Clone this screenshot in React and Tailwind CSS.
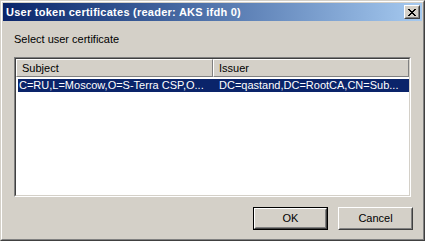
const FONT = "font-['Tahoma','Liberation_Sans',sans-serif]";

function CloseGlyph() {
  const rows = ['11000011', '01100110', '00111100', '00011000', '00111100', '01100110', '11000011'];
  return (
    <svg width="8" height="7" viewBox="0 0 8 7" shapeRendering="crispEdges">
      {rows.map((row, y) =>
        row.split('').map((c, x) => (c === '1' ? <rect key={`${x}-${y}`} x={x} y={y} width="1" height="1" fill="#000" /> : null))
      )}
    </svg>
  );
}

function Button({ children, isDefault }) {
  const inner = (
    <div className="w-full h-full border border-t-white border-l-white border-b-[#404040] border-r-[#404040]">
      <div className="w-full h-full border border-t-[#d4d0c8] border-l-[#d4d0c8] border-b-[#808080] border-r-[#808080] flex items-center justify-center text-black">
        {children}
      </div>
    </div>
  );
  return (
    <div className={`w-[75px] h-[23px] bg-[#d4d0c8] ${isDefault ? 'border border-black' : ''}`}>
      {inner}
    </div>
  );
}

function HeaderCell({ children, className }) {
  return (
    <div className={`h-full bg-[#d4d0c8] border border-t-white border-l-white border-b-[#808080] border-r-[#808080] pl-[5px] flex items-center ${className}`}>
      {children}
    </div>
  );
}

export default function App() {
  return (
    <div className={`w-[425px] h-[241px] border border-t-[#d4d0c8] border-l-[#d4d0c8] border-b-[#404040] border-r-[#404040] text-[11px] leading-[13px] ${FONT}`}>
      <div className="h-full border border-t-white border-l-white border-b-[#808080] border-r-[#808080] bg-[#d4d0c8] p-px flex flex-col">
        <div className="h-[18px] flex items-center bg-gradient-to-r from-[#0a246a] to-[#a6caf0] pl-[3px] pr-[2px]">
          <span className="flex-1 font-bold text-white whitespace-nowrap tracking-[0.25px]">User token certificates (reader: AKS ifdh 0)</span>
          <div className="w-[16px] h-[14px] bg-[#d4d0c8] border border-t-white border-l-white border-b-[#404040] border-r-[#404040]">
            <div className="w-full h-full border border-t-[#d4d0c8] border-l-[#d4d0c8] border-b-[#808080] border-r-[#808080] flex items-center justify-center">
              <CloseGlyph />
            </div>
          </div>
        </div>

        <div className="flex-1 flex flex-col pl-[11px] pr-[9px]">
          <div className="mt-[12px] text-black">Select user certificate</div>

          <div className="mt-[11px] w-[397px] h-[140px] border border-t-[#808080] border-l-[#808080] border-b-white border-r-white">
            <div className="w-full h-full bg-white border border-t-[#404040] border-l-[#404040] border-b-[#d4d0c8] border-r-[#d4d0c8] flex flex-col">
              <div className="h-[18px] flex text-black">
                <HeaderCell className="w-[197px]">Subject</HeaderCell>
                <HeaderCell className="flex-1">Issuer</HeaderCell>
              </div>
              <div className="mt-[2px] ml-[2px] h-[13px] bg-[#0a246a] text-white flex whitespace-nowrap">
                <div className="w-[195px] pl-px">C=RU,L=Moscow,O=S-Terra CSP,O...</div>
                <div className="pl-[6px]">DC=qastand,DC=RootCA,CN=Sub...</div>
              </div>
            </div>
          </div>

          <div className="mt-[10px] flex justify-end gap-[10px]">
            <Button isDefault>OK</Button>
            <Button>Cancel</Button>
          </div>
        </div>
      </div>
    </div>
  );
}
